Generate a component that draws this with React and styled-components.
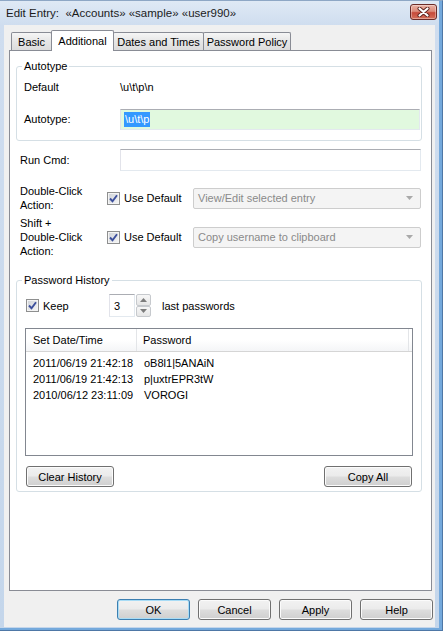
import React from "react";
import styled, { createGlobalStyle } from "styled-components";

const GlobalStyle = createGlobalStyle`
  html, body {
    margin: 0;
    padding: 0;
    background: #c7d8ec;
  }
  body {
    font-family: "Liberation Sans", Arial, sans-serif;
    font-size: 11px;
    color: #000;
  }
  * {
    box-sizing: border-box;
  }
`;

const Window = styled.div`
  width: 443px;
  height: 631px;
  display: flex;
  flex-direction: column;
  background: linear-gradient(#dfe9f5 0px, #cfddef 24px, #c4d6eb 100%);
  border-top: 1px solid #8ea7c5;
  border-right: 1px solid #4e77a6;
  border-bottom: 1px solid #4e77a6;
  box-shadow: inset -3px 0 0 #74a9dc, inset 0 -2px 0 #74a9dc;
`;

const TitleBar = styled.div`
  height: 24px;
  display: flex;
  align-items: flex-start;
  justify-content: space-between;
  padding: 0 5px 0 6px;
`;

const TitleText = styled.span`
  font-size: 11.5px;
  line-height: 24px;
  color: #1b1b1b;
  white-space: pre;
`;

const CloseButton = styled.div`
  width: 27px;
  height: 16px;
  margin-top: 3px;
  border: 1px solid #6b2b27;
  border-radius: 3px;
  background: linear-gradient(#eab1a4 0%, #dc8c7b 45%, #c64a3a 55%, #d5705b 100%);
  box-shadow: inset 0 0 0 1px rgba(255, 255, 255, 0.35);
  display: flex;
  align-items: center;
  justify-content: center;
`;

const Body = styled.div`
  flex: 1;
  display: flex;
  flex-direction: column;
  padding: 0 7px 3px 4px;
`;

const Client = styled.div`
  flex: 1;
  display: flex;
  flex-direction: column;
  background: #f0f0f0;
  padding: 5px 2px 7px 5px;
`;

const TabRow = styled.div`
  display: flex;
  align-items: flex-end;
  height: 21px;
  padding-left: 2px;
  position: relative;
  z-index: 1;
`;

const Tab = styled.div`
  width: ${(p) => p.$width}px;
  height: ${(p) => (p.$active ? 21 : 18)}px;
  margin-left: ${(p) => (p.$first ? 0 : -1)}px;
  margin-bottom: ${(p) => (p.$active ? 0 : 1)}px;
  border: 1px solid #898c95;
  border-bottom: none;
  border-radius: 2px 2px 0 0;
  background: ${(p) =>
    p.$active ? "#ffffff" : "linear-gradient(#f6f6f6, #e6e6e6 50%, #dcdcdc)"};
  position: relative;
  z-index: ${(p) => (p.$active ? 2 : 1)};
  display: flex;
  align-items: center;
  justify-content: center;
  padding-top: ${(p) => (p.$active ? 0 : 1)}px;
  white-space: nowrap;
`;

const Panel = styled.div`
  flex: 1;
  margin: -1px 1px 0 0;
  background: #ffffff;
  border: 1px solid #898c95;
  padding: 0 9px 0 6px;
  display: flex;
  flex-direction: column;
`;

const GroupBox = styled.div`
  position: relative;
  border: 1px solid #d5dfe5;
  border-radius: 3px;
  margin-top: ${(p) => p.$top}px;
  padding: ${(p) => p.$pad};
`;

const GroupTitle = styled.span`
  position: absolute;
  top: -7px;
  left: 5px;
  padding: 0 2px;
  line-height: 13px;
  background: #ffffff;
`;

const AutoGrid = styled.div`
  display: grid;
  grid-template-columns: 96px 1fr;
  grid-template-rows: 13px 21px;
  row-gap: 15px;
  align-items: center;
`;

const Label = styled.span`
  line-height: ${(p) => p.$lh || 13}px;
  white-space: nowrap;
`;

const TextBox = styled.div`
  height: ${(p) => p.$h}px;
  background: ${(p) => p.$bg || "#ffffff"};
  border: 1px solid #e3e9ef;
  border-top-color: #abadb3;
  border-left-color: #e2e3ea;
  display: flex;
  align-items: center;
  padding-left: 3px;
`;

const Selected = styled.span`
  background: #3399ff;
  color: #ffffff;
  line-height: 15px;
  padding: 0 1px;
`;

const FieldRow = styled.div`
  display: grid;
  grid-template-columns: ${(p) => p.$cols};
  align-items: center;
  margin-top: ${(p) => p.$top}px;
  margin-right: 1px;
  padding-left: 4px;
`;

const CheckLabel = styled.label`
  display: flex;
  align-items: center;
  gap: 4px;
  width: ${(p) => p.$width}px;
  margin-left: ${(p) => p.$left || 0}px;
  white-space: nowrap;
`;

const CheckBox = styled.span`
  width: 13px;
  height: 13px;
  flex: none;
  border: 1px solid #8e8f8f;
  background: linear-gradient(135deg, #cdd1d7, #f7f7f7);
  box-shadow: inset 0 0 0 1px #f4f4f4;
  display: flex;
  align-items: center;
  justify-content: center;
`;

const ComboBox = styled.div`
  height: 21px;
  border: 1px solid #cdcdcd;
  border-radius: 2px;
  background: #f4f4f4;
  color: #8a8a8a;
  display: flex;
  align-items: center;
  justify-content: space-between;
  padding: 0 7px 0 4px;
`;

const KeepRow = styled.div`
  display: flex;
  align-items: center;
  height: 23px;
`;

const SpinInput = styled(TextBox)`
  width: 26px;
  padding-left: 4px;
`;

const SpinButtons = styled.div`
  width: 15px;
  height: 23px;
  margin-left: 1px;
  display: flex;
  flex-direction: column;
`;

const SpinHalf = styled.div`
  flex: 1;
  border: 1px solid #c6c9cd;
  border-radius: 2px;
  background: linear-gradient(#f7f7f7, #e6e6e6);
  display: flex;
  align-items: center;
  justify-content: center;
`;

const Suffix = styled.span`
  margin-left: 11px;
`;

const ListView = styled.div`
  margin-top: 11px;
  height: 128px;
  border: 1px solid #828790;
  background: #ffffff;
`;

const ListHeader = styled.div`
  display: flex;
  height: 23px;
  border-bottom: 1px solid #d5d5d5;
  background: linear-gradient(#ffffff, #ffffff 50%, #f4f5f7);
`;

const HeaderCell = styled.div`
  width: ${(p) => p.$width}px;
  padding-left: ${(p) => p.$pad}px;
  border-right: 1px solid #e3e5e8;
  display: flex;
  align-items: center;
`;

const ListBody = styled.div`
  padding-top: 3px;
`;

const ListRow = styled.div`
  display: flex;
  height: 16px;
  align-items: center;
`;

const Cell = styled.span`
  width: ${(p) => p.$width}px;
  padding-left: ${(p) => p.$pad}px;
  white-space: nowrap;
`;

const GroupButtons = styled.div`
  display: flex;
  justify-content: space-between;
  margin-top: 10px;
  padding: 0 1px;
`;

const Button = styled.div`
  width: ${(p) => p.$width}px;
  height: 21px;
  border: 1px solid ${(p) => (p.$default ? "#3c7fb1" : "#707070")};
  border-radius: 3px;
  background: linear-gradient(#f2f2f2 0%, #ebebeb 48%, #dddddd 52%, #cfcfcf 100%);
  box-shadow: inset 0 0 0 1px ${(p) => (p.$default ? "#a8dcf6" : "#fbfbfb")};
  display: flex;
  align-items: center;
  justify-content: center;
  white-space: nowrap;
`;

const ButtonBar = styled.div`
  display: flex;
  justify-content: flex-end;
  gap: 8px;
  margin-top: 8px;
`;

const CloseGlyph = () => (
  <svg width="13" height="10" viewBox="0 0 13 10">
    <path d="M2.5 1.5 L10.5 8.5 M10.5 1.5 L2.5 8.5" stroke="#5a211d" strokeWidth="4" strokeLinecap="round" />
    <path d="M2.5 1.5 L10.5 8.5 M10.5 1.5 L2.5 8.5" stroke="#ffffff" strokeWidth="2.2" strokeLinecap="round" />
  </svg>
);

const CheckMark = () => (
  <svg width="9" height="9" viewBox="0 0 9 9">
    <path d="M1 4.5 L3.5 7.2 L8 1.2" fill="none" stroke="#3c4f9c" strokeWidth="1.9" />
  </svg>
);

const Arrow = ({ up, color = "#8f8f8f" }) => (
  <svg width="7" height="4" viewBox="0 0 7 4">
    <path d={up ? "M0 4 L3.5 0 L7 4 Z" : "M0 0 L7 0 L3.5 4 Z"} fill={color} />
  </svg>
);

const Check = ({ label, width, left }) => (
  <CheckLabel $width={width} $left={left}>
    <CheckBox>
      <CheckMark />
    </CheckBox>
    {label}
  </CheckLabel>
);

const tabs = [
  { name: "Basic", width: 41 },
  { name: "Additional", width: 63, active: true },
  { name: "Dates and Times", width: 91 },
  { name: "Password Policy", width: 88 },
];

const history = [
  ["2011/06/19 21:42:18", "oB8l1|5ANAiN"],
  ["2011/06/19 21:42:13", "p|uxtrEPR3tW"],
  ["2010/06/12 23:11:09", "VOROGI"],
];

export default function App() {
  return (
    <>
      <GlobalStyle />
      <Window>
        <TitleBar>
          <TitleText>{"Edit Entry:  «Accounts» «sample» «user990»"}</TitleText>
          <CloseButton>
            <CloseGlyph />
          </CloseButton>
        </TitleBar>
        <Body>
          <Client>
            <TabRow>
              {tabs.map((t, i) => (
                <Tab key={t.name} $width={t.width} $active={t.active} $first={i === 0}>
                  {t.name}
                </Tab>
              ))}
            </TabRow>
            <Panel>
              <GroupBox $top={15} $pad="14px 1px 10px 7px">
                <GroupTitle>Autotype</GroupTitle>
                <AutoGrid>
                  <Label>Default</Label>
                  <Label>\u\t\p\n</Label>
                  <Label>Autotype:</Label>
                  <TextBox $h={21} $bg="#e1f9df">
                    <Selected>\u\t\p</Selected>
                  </TextBox>
                </AutoGrid>
              </GroupBox>

              <FieldRow $top={8} $cols="100px 1fr">
                <Label>Run Cmd:</Label>
                <TextBox $h={22} />
              </FieldRow>

              <FieldRow $top={13} $cols="87px 86px 1fr">
                <Label $lh={14}>
                  Double-Click
                  <br />
                  Action:
                </Label>
                <Check label="Use Default" />
                <ComboBox>
                  View/Edit selected entry
                  <Arrow color="#a9a9a9" />
                </ComboBox>
              </FieldRow>

              <FieldRow $top={4} $cols="87px 86px 1fr">
                <Label $lh={14}>
                  Shift +
                  <br />
                  Double-Click
                  <br />
                  Action:
                </Label>
                <Check label="Use Default" />
                <ComboBox>
                  Copy username to clipboard
                  <Arrow color="#a9a9a9" />
                </ComboBox>
              </FieldRow>

              <GroupBox $top={22} $pad="13px 8px 4px 8px">
                <GroupTitle>Password History</GroupTitle>
                <KeepRow>
                  <Check label="Keep" width={83} left={1} />
                  <SpinInput $h={23}>3</SpinInput>
                  <SpinButtons>
                    <SpinHalf>
                      <Arrow up color="#7c7c7c" />
                    </SpinHalf>
                    <SpinHalf>
                      <Arrow color="#7c7c7c" />
                    </SpinHalf>
                  </SpinButtons>
                  <Suffix>last passwords</Suffix>
                </KeepRow>
                <ListView>
                  <ListHeader>
                    <HeaderCell $width={111} $pad={7}>
                      Set Date/Time
                    </HeaderCell>
                    <HeaderCell $width={272} $pad={6}>
                      Password
                    </HeaderCell>
                  </ListHeader>
                  <ListBody>
                    {history.map(([date, pw]) => (
                      <ListRow key={date}>
                        <Cell $width={111} $pad={7}>
                          {date}
                        </Cell>
                        <Cell $pad={7}>{pw}</Cell>
                      </ListRow>
                    ))}
                  </ListBody>
                </ListView>
                <GroupButtons>
                  <Button $width={88}>Clear History</Button>
                  <Button $width={88}>Copy All</Button>
                </GroupButtons>
              </GroupBox>
            </Panel>
            <ButtonBar>
              <Button $width={73} $default>
                OK
              </Button>
              <Button $width={73}>Cancel</Button>
              <Button $width={73}>Apply</Button>
              <Button $width={73}>Help</Button>
            </ButtonBar>
          </Client>
        </Body>
      </Window>
    </>
  );
}
